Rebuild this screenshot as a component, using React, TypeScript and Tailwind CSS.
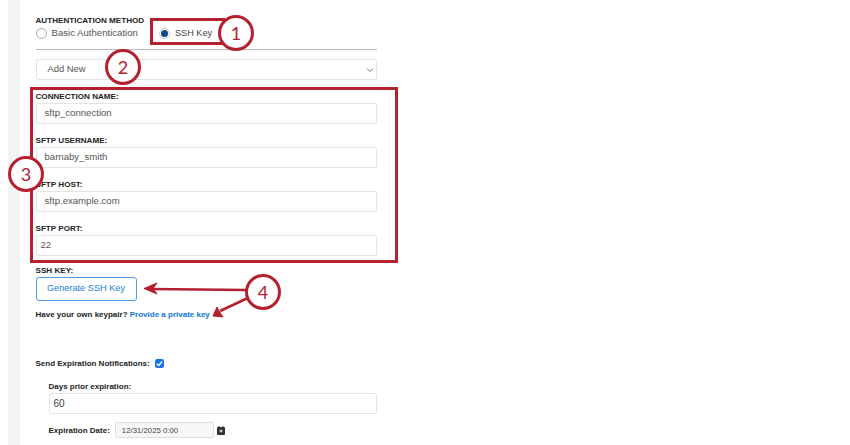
const LABEL = 'text-[8.1px] leading-[11px] font-bold text-[#222]'
const INPUT = 'h-[21px] rounded-[2px] border border-[#e4e4e6] bg-white flex items-center text-[9.6px] text-[#555]'
const NOTE = 'text-[8px] leading-[11px] font-bold text-[#222]'

function Field({ label, value, indent = 'pl-2', mt = 'mt-[11px]' }: { label: string; value: string; indent?: string; mt?: string }) {
  return (
    <div className={mt}>
      <p className={LABEL + ' uppercase'}>{label}</p>
      <div className={INPUT + ' mt-[1px] ' + indent}>{value}</div>
    </div>
  )
}

function Bubble({ n, className }: { n: number; className: string }) {
  return (
    <div className={"absolute w-[36px] h-[36px] rounded-full border-[3px] border-[#b5202f] bg-white flex items-center justify-center font-['Lato',sans-serif] text-[18px] text-[#b5202f] " + className}>
      {n}
    </div>
  )
}

export default function App() {
  return (
    <div className="relative w-[850px] h-[445px] overflow-hidden bg-white font-['Liberation_Sans',Arial,sans-serif]">
      <div className="flex h-full pl-2">
        <div className="w-3 bg-[#f4f4f7]" />
        <div className="w-[341.5px] ml-[15.5px] pt-[15px]">
          {/* Metodo */}
          <p className={LABEL + ' uppercase'}>Authentication Method</p>
          <div className="flex items-center h-[13px] mt-[1px] text-[9.6px] text-[#555]">
            <span className="w-[11px] h-[11px] rounded-full border border-[#aaa] bg-white" />
            <span className="ml-[5px]">Basic Authentication</span>
            <span className="ml-[21px] w-[11px] h-[11px] rounded-full border border-[#ccc] flex items-center justify-center">
              <span className="w-[7px] h-[7px] rounded-full bg-[#0b4a8f]" />
            </span>
            <span className="ml-[5px] text-[9.2px] text-[#444]">SSH Key</span>
          </div>
          <div className="mt-[9px] h-px bg-[#b9b9bb]" />

          <div className="mt-[9px] h-[21px] rounded-[2px] border border-[#e4e4e6] flex items-center justify-between pl-[11px] pr-[2px] text-[9.4px] text-[#555]">
            Add New
            <svg width="8" height="8" viewBox="0 0 8 8" fill="none" stroke="#777" strokeWidth="1">
              <path d="M1 2.5 4 5.5 7 2.5" />
            </svg>
          </div>

          <Field label="Connection Name:" value="sftp_connection" />
          <Field label="SFTP Username:" value="barnaby_smith" />
          <Field label="SFTP Host:" value="sftp.example.com" />
          <Field label="SFTP Port:" value="22" indent="pl-1" />

          <p className={LABEL + ' mt-[9px] uppercase'}>SSH Key:</p>
          <button className="block mt-[1px] w-[101px] h-[24px] rounded-[3px] border border-[#4a9be8] text-[9.2px] text-[#1a7fdb]">
            Generate SSH Key
          </button>
          <p className={NOTE + ' mt-[8px]'}>
            Have your own keypair? <span className="text-[#0b78d8]">Provide a private key</span>
          </p>

          <div className={NOTE + ' mt-[38px] flex items-center h-[11px]'}>
            Send Expiration Notifications:
            <span className="ml-[5px] w-[9px] h-[9px] rounded-[2px] bg-[#1a73e8] flex items-center justify-center">
              <svg width="7" height="7" viewBox="0 0 8 8" fill="none" stroke="#fff" strokeWidth="1.6">
                <path d="M1 4.2 3.2 6.3 7 1.6" />
              </svg>
            </span>
          </div>

          <div className="ml-[13px]">
            <p className={NOTE + ' mt-[12px]'}>Days prior expiration:</p>
            <div className="mt-[1px] h-[21px] rounded-[2px] border border-[#e4e4e6] pl-1 flex items-center text-[10px] text-[#444]">60</div>
            <div className={NOTE + ' mt-[8px] flex items-center'}>
              Expiration Date:
              <span className="ml-[5px] w-[99px] h-[16px] rounded-[2px] border border-[#dedede] bg-[#f7f7f7] pl-[6px] flex items-center text-[7.8px] font-normal text-[#444]">
                12/31/2025 0:00
              </span>
              <svg className="ml-[3px]" width="8" height="9" viewBox="0 0 8 9">
                <rect y="1" width="8" height="8" rx="1" fill="#333" />
                <rect x="1.5" width="1" height="2" fill="#333" />
                <rect x="5.5" width="1" height="2" fill="#333" />
                <path d="M4 3.5v3M2.5 5h3" stroke="#fff" strokeWidth="1" />
              </svg>
            </div>
          </div>
        </div>
      </div>

      {/* Anotacoes */}
      <div className="absolute left-[150px] top-[18px] w-[75px] h-[27px] border-[3px] border-[#b5202f]" />
      <div className="absolute left-[30px] top-[87px] w-[368px] h-[176px] border-[3px] border-[#b5202f]" />
      <svg className="absolute left-0 top-0" width="850" height="445" fill="#b5202f" stroke="#b5202f">
        <path d="M150 289 246 290" strokeWidth="2.5" />
        <path d="M144 288.5 157 283 153 288.5 157 294Z" />
        <path d="M220 311 250 297" strokeWidth="2.5" />
        <path d="M213 316 217 307 219 311 223 317Z" />
      </svg>
      <Bubble n={1} className="left-[218px] top-[15px]" />
      <Bubble n={2} className="left-[105px] top-[49px]" />
      <Bubble n={3} className="left-[8px] top-[156px]" />
      <Bubble n={4} className="left-[245px] top-[274px]" />
    </div>
  )
}
